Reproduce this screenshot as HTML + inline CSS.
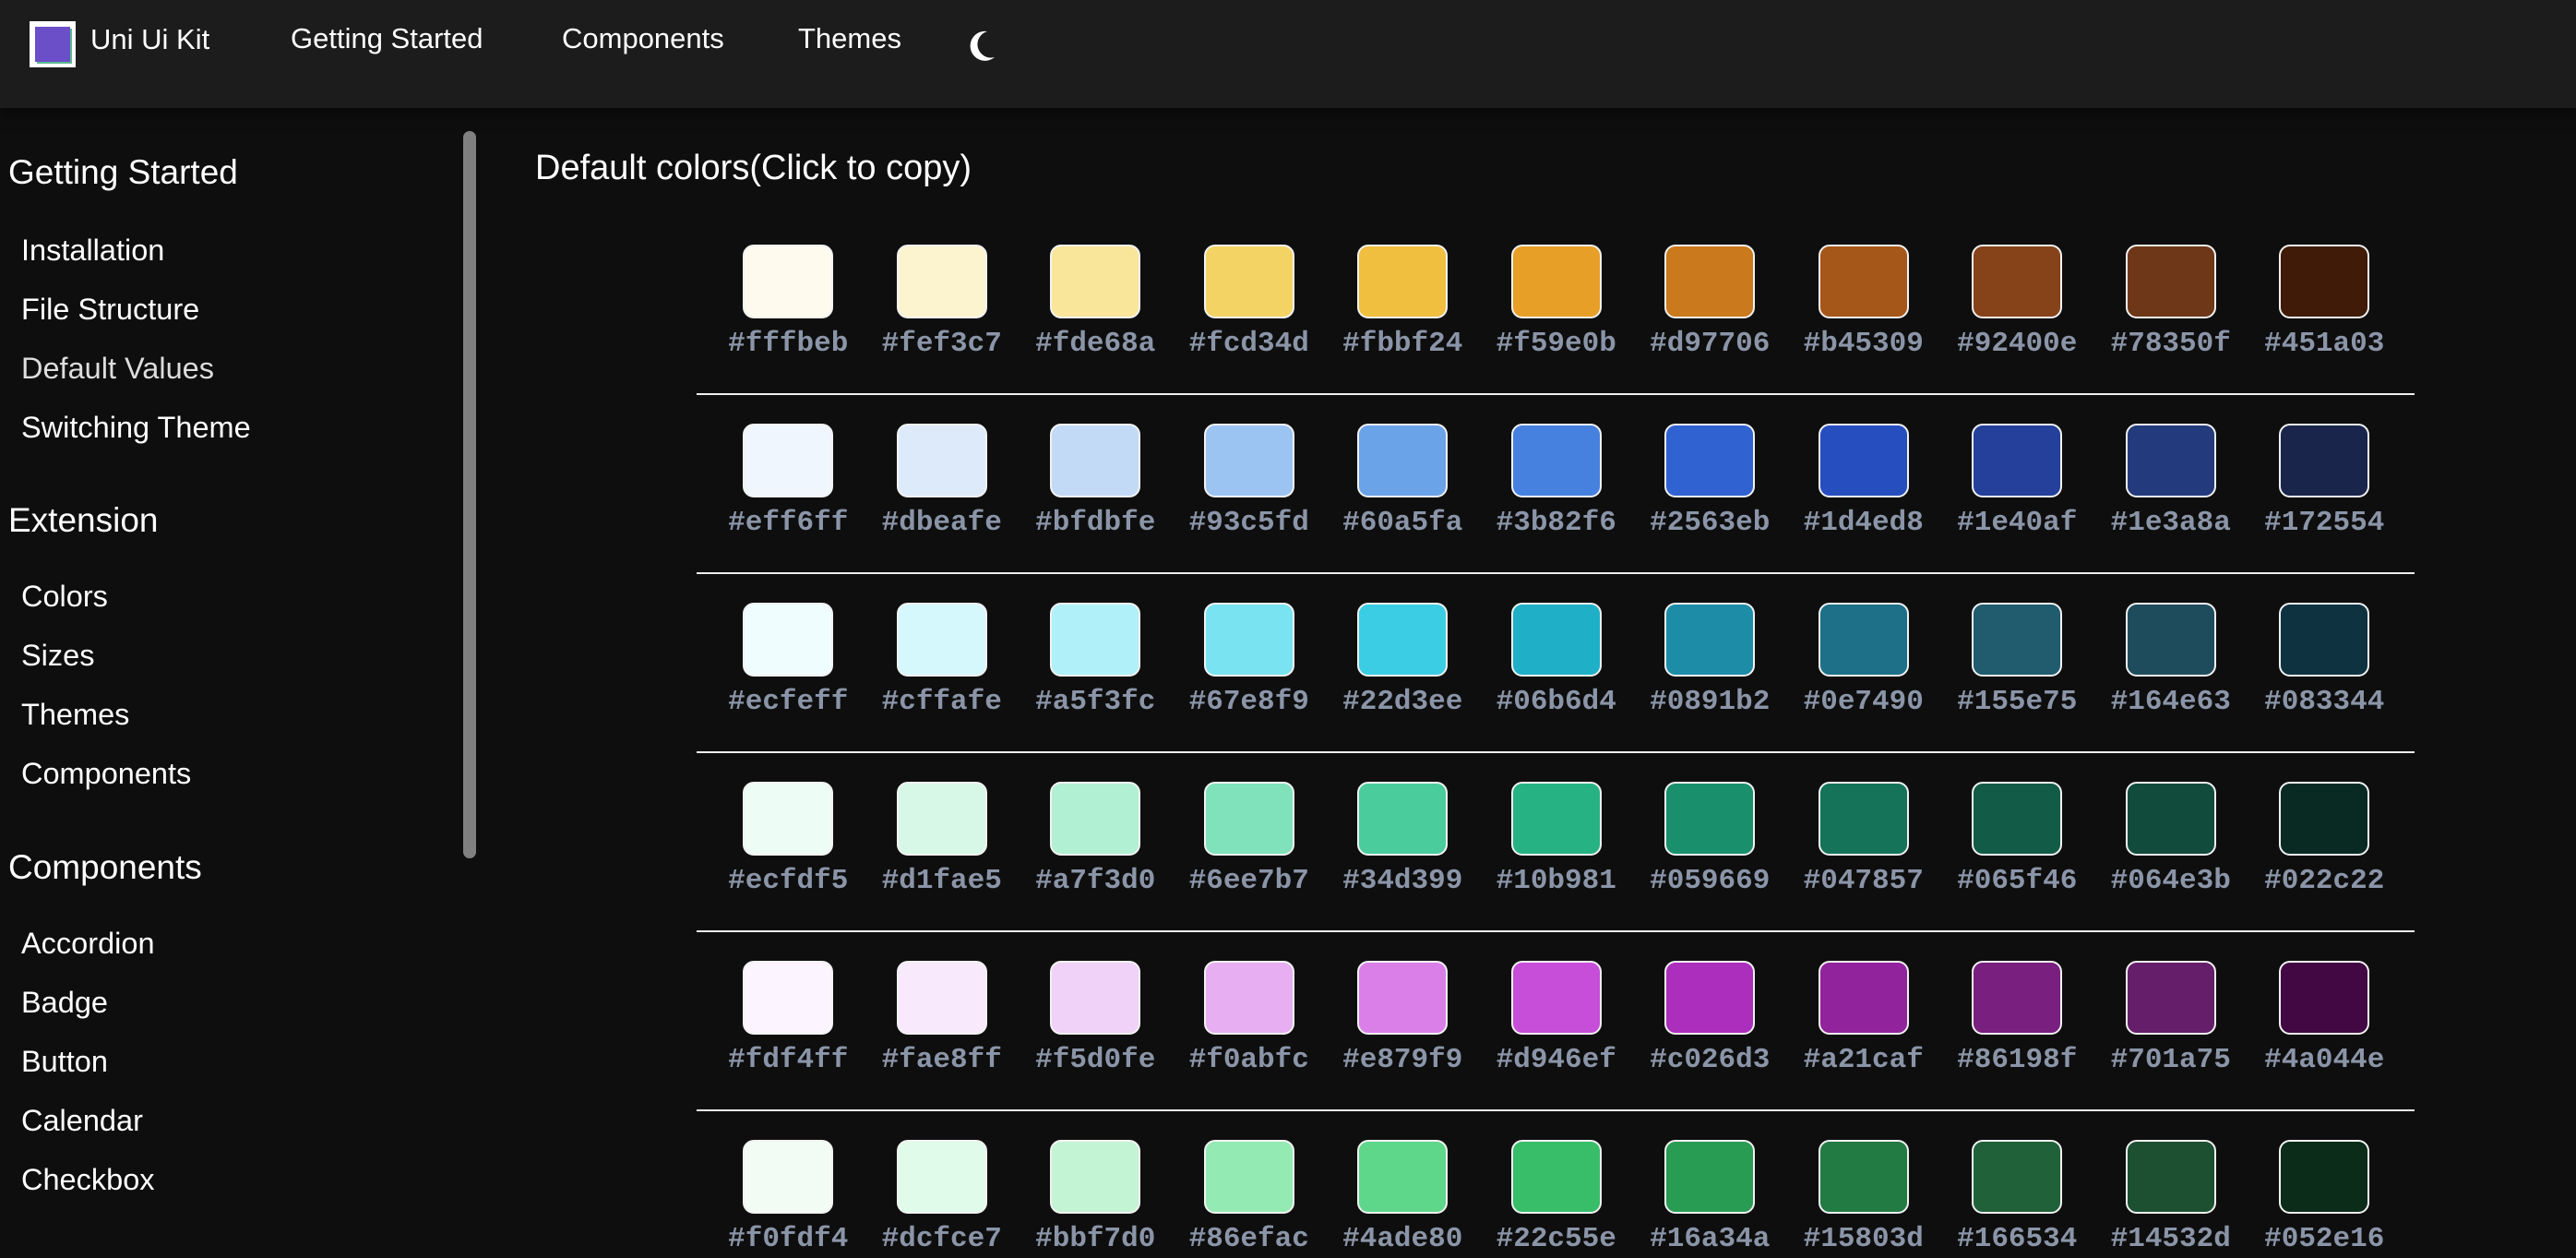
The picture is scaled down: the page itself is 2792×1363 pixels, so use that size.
<!DOCTYPE html>
<html><head><meta charset="utf-8"><style>
*{margin:0;padding:0;box-sizing:border-box}
body{width:2792px;height:1302px;overflow:hidden;background:#0e0e0e;font-family:"Liberation Sans",sans-serif;color:#fff;position:relative}
.nav{position:absolute;left:0;top:0;width:2792px;height:117px;background:#1c1c1c;box-shadow:0 6px 14px rgba(0,0,0,.5)}
.a{position:absolute;white-space:nowrap}
.logo{position:absolute;left:32px;top:23px;width:50px;height:50px;background:#fff;padding:6px}
.logo div{width:100%;height:100%;background:#6a4fc8;box-shadow:2px 2px 0 #5fb894}
.nv{font-size:31px;top:24px}
.sh{font-size:37px;left:9px}
.si{font-size:32.5px;left:23px}
.sb{position:absolute;left:502px;top:142px;width:14px;height:788px;background:#808080;border-radius:7px}
.row{position:absolute;left:771px;display:flex}
.c{width:166.5px;display:flex;flex-direction:column;align-items:center}
.s{width:98px;height:80px;border:2px solid #f2f2f2;border-radius:12px;filter:saturate(.82)}
.l{font-family:"Liberation Mono",monospace;font-weight:bold;font-size:31px;color:#8b95a8;margin-top:8px;line-height:40px}
.hr{position:absolute;left:755px;width:1862px;height:2px;background:#eee}
</style></head><body>
<div class="nav">
<div class="logo"><div></div></div>
<div class="a" style="left:98px;top:25px;font-size:31px">Uni Ui Kit</div>
<div class="a nv" style="left:315px">Getting Started</div>
<div class="a nv" style="left:609px">Components</div>
<div class="a nv" style="left:865px">Themes</div>
<svg class="a" style="left:1048px;top:32px" width="34" height="36" viewBox="0 0 34 36"><path d="M22 2A16 16 0 1 0 30 30 13 13 0 0 1 22 2Z" fill="#fff"/></svg>
</div>
<div class="sb"></div>
<div class="a sh" style="top:166px">Getting Started</div>
<div class="a si" style="top:253px">Installation</div>
<div class="a si" style="top:317px">File Structure</div>
<div class="a si" style="top:381px;color:#ddd">Default Values</div>
<div class="a si" style="top:445px">Switching Theme</div>
<div class="a sh" style="top:543px">Extension</div>
<div class="a si" style="top:628px">Colors</div>
<div class="a si" style="top:692px">Sizes</div>
<div class="a si" style="top:756px">Themes</div>
<div class="a si" style="top:820px">Components</div>
<div class="a sh" style="top:919px">Components</div>
<div class="a si" style="top:1004px">Accordion</div>
<div class="a si" style="top:1068px">Badge</div>
<div class="a si" style="top:1132px">Button</div>
<div class="a si" style="top:1196px">Calendar</div>
<div class="a si" style="top:1260px">Checkbox</div>
<div class="a" style="left:580px;top:161px;font-size:38px">Default colors(Click to copy)</div>

<div class="row" style="top:265px">
<div class="c"><div class="s" style="background:#fffbeb"></div><div class="l">#fffbeb</div></div>
<div class="c"><div class="s" style="background:#fef3c7"></div><div class="l">#fef3c7</div></div>
<div class="c"><div class="s" style="background:#fde68a"></div><div class="l">#fde68a</div></div>
<div class="c"><div class="s" style="background:#fcd34d"></div><div class="l">#fcd34d</div></div>
<div class="c"><div class="s" style="background:#fbbf24"></div><div class="l">#fbbf24</div></div>
<div class="c"><div class="s" style="background:#f59e0b"></div><div class="l">#f59e0b</div></div>
<div class="c"><div class="s" style="background:#d97706"></div><div class="l">#d97706</div></div>
<div class="c"><div class="s" style="background:#b45309"></div><div class="l">#b45309</div></div>
<div class="c"><div class="s" style="background:#92400e"></div><div class="l">#92400e</div></div>
<div class="c"><div class="s" style="background:#78350f"></div><div class="l">#78350f</div></div>
<div class="c"><div class="s" style="background:#451a03"></div><div class="l">#451a03</div></div>
</div>
<div class="hr" style="top:426px"></div>
<div class="row" style="top:459px">
<div class="c"><div class="s" style="background:#eff6ff"></div><div class="l">#eff6ff</div></div>
<div class="c"><div class="s" style="background:#dbeafe"></div><div class="l">#dbeafe</div></div>
<div class="c"><div class="s" style="background:#bfdbfe"></div><div class="l">#bfdbfe</div></div>
<div class="c"><div class="s" style="background:#93c5fd"></div><div class="l">#93c5fd</div></div>
<div class="c"><div class="s" style="background:#60a5fa"></div><div class="l">#60a5fa</div></div>
<div class="c"><div class="s" style="background:#3b82f6"></div><div class="l">#3b82f6</div></div>
<div class="c"><div class="s" style="background:#2563eb"></div><div class="l">#2563eb</div></div>
<div class="c"><div class="s" style="background:#1d4ed8"></div><div class="l">#1d4ed8</div></div>
<div class="c"><div class="s" style="background:#1e40af"></div><div class="l">#1e40af</div></div>
<div class="c"><div class="s" style="background:#1e3a8a"></div><div class="l">#1e3a8a</div></div>
<div class="c"><div class="s" style="background:#172554"></div><div class="l">#172554</div></div>
</div>
<div class="hr" style="top:620px"></div>
<div class="row" style="top:653px">
<div class="c"><div class="s" style="background:#ecfeff"></div><div class="l">#ecfeff</div></div>
<div class="c"><div class="s" style="background:#cffafe"></div><div class="l">#cffafe</div></div>
<div class="c"><div class="s" style="background:#a5f3fc"></div><div class="l">#a5f3fc</div></div>
<div class="c"><div class="s" style="background:#67e8f9"></div><div class="l">#67e8f9</div></div>
<div class="c"><div class="s" style="background:#22d3ee"></div><div class="l">#22d3ee</div></div>
<div class="c"><div class="s" style="background:#06b6d4"></div><div class="l">#06b6d4</div></div>
<div class="c"><div class="s" style="background:#0891b2"></div><div class="l">#0891b2</div></div>
<div class="c"><div class="s" style="background:#0e7490"></div><div class="l">#0e7490</div></div>
<div class="c"><div class="s" style="background:#155e75"></div><div class="l">#155e75</div></div>
<div class="c"><div class="s" style="background:#164e63"></div><div class="l">#164e63</div></div>
<div class="c"><div class="s" style="background:#083344"></div><div class="l">#083344</div></div>
</div>
<div class="hr" style="top:814px"></div>
<div class="row" style="top:847px">
<div class="c"><div class="s" style="background:#ecfdf5"></div><div class="l">#ecfdf5</div></div>
<div class="c"><div class="s" style="background:#d1fae5"></div><div class="l">#d1fae5</div></div>
<div class="c"><div class="s" style="background:#a7f3d0"></div><div class="l">#a7f3d0</div></div>
<div class="c"><div class="s" style="background:#6ee7b7"></div><div class="l">#6ee7b7</div></div>
<div class="c"><div class="s" style="background:#34d399"></div><div class="l">#34d399</div></div>
<div class="c"><div class="s" style="background:#10b981"></div><div class="l">#10b981</div></div>
<div class="c"><div class="s" style="background:#059669"></div><div class="l">#059669</div></div>
<div class="c"><div class="s" style="background:#047857"></div><div class="l">#047857</div></div>
<div class="c"><div class="s" style="background:#065f46"></div><div class="l">#065f46</div></div>
<div class="c"><div class="s" style="background:#064e3b"></div><div class="l">#064e3b</div></div>
<div class="c"><div class="s" style="background:#022c22"></div><div class="l">#022c22</div></div>
</div>
<div class="hr" style="top:1008px"></div>
<div class="row" style="top:1041px">
<div class="c"><div class="s" style="background:#fdf4ff"></div><div class="l">#fdf4ff</div></div>
<div class="c"><div class="s" style="background:#fae8ff"></div><div class="l">#fae8ff</div></div>
<div class="c"><div class="s" style="background:#f5d0fe"></div><div class="l">#f5d0fe</div></div>
<div class="c"><div class="s" style="background:#f0abfc"></div><div class="l">#f0abfc</div></div>
<div class="c"><div class="s" style="background:#e879f9"></div><div class="l">#e879f9</div></div>
<div class="c"><div class="s" style="background:#d946ef"></div><div class="l">#d946ef</div></div>
<div class="c"><div class="s" style="background:#c026d3"></div><div class="l">#c026d3</div></div>
<div class="c"><div class="s" style="background:#a21caf"></div><div class="l">#a21caf</div></div>
<div class="c"><div class="s" style="background:#86198f"></div><div class="l">#86198f</div></div>
<div class="c"><div class="s" style="background:#701a75"></div><div class="l">#701a75</div></div>
<div class="c"><div class="s" style="background:#4a044e"></div><div class="l">#4a044e</div></div>
</div>
<div class="hr" style="top:1202px"></div>
<div class="row" style="top:1235px">
<div class="c"><div class="s" style="background:#f0fdf4"></div><div class="l">#f0fdf4</div></div>
<div class="c"><div class="s" style="background:#dcfce7"></div><div class="l">#dcfce7</div></div>
<div class="c"><div class="s" style="background:#bbf7d0"></div><div class="l">#bbf7d0</div></div>
<div class="c"><div class="s" style="background:#86efac"></div><div class="l">#86efac</div></div>
<div class="c"><div class="s" style="background:#4ade80"></div><div class="l">#4ade80</div></div>
<div class="c"><div class="s" style="background:#22c55e"></div><div class="l">#22c55e</div></div>
<div class="c"><div class="s" style="background:#16a34a"></div><div class="l">#16a34a</div></div>
<div class="c"><div class="s" style="background:#15803d"></div><div class="l">#15803d</div></div>
<div class="c"><div class="s" style="background:#166534"></div><div class="l">#166534</div></div>
<div class="c"><div class="s" style="background:#14532d"></div><div class="l">#14532d</div></div>
<div class="c"><div class="s" style="background:#052e16"></div><div class="l">#052e16</div></div>
</div>
</body></html>
